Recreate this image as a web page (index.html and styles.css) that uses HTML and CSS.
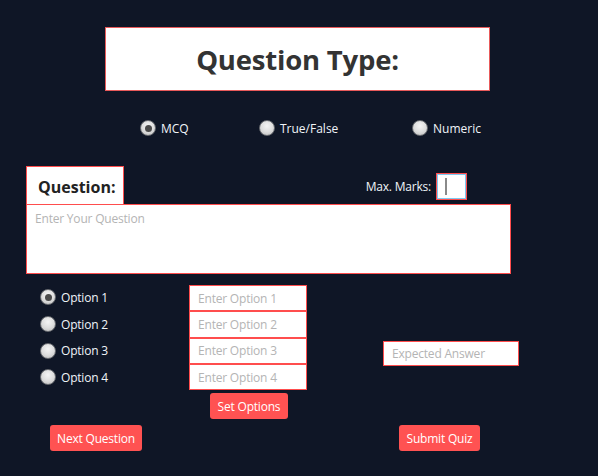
FILE: index.html
```html
<!DOCTYPE html>
<html>
<head>
<meta charset="utf-8">
<link rel="stylesheet" href="styles.css">
</head>
<body>
<div class="page">
  <div class="title">Question Type:</div>
  <div class="types">
    <label class="type t1"><span class="radio on"></span>MCQ</label>
    <label class="type t2"><span class="radio"></span>True/False</label>
    <label class="type t3"><span class="radio"></span>Numeric</label>
  </div>
  <div class="qhead">
    <div class="qlabel">Question:</div>
    <div class="marks">
      <span class="marks-label">Max. Marks:</span>
      <span class="marks-input"><span class="caret"></span></span>
    </div>
  </div>
  <div class="qarea">Enter Your Question</div>
  <div class="options">
    <div class="opt-col">
      <label class="opt"><span class="radio on"></span>Option 1</label>
      <label class="opt"><span class="radio"></span>Option 2</label>
      <label class="opt"><span class="radio"></span>Option 3</label>
      <label class="opt"><span class="radio"></span>Option 4</label>
    </div>
    <div class="input-col">
      <div class="field">Enter Option 1</div>
      <div class="field">Enter Option 2</div>
      <div class="field">Enter Option 3</div>
      <div class="field">Enter Option 4</div>
      <div class="btn set">Set Options</div>
    </div>
    <div class="answer-col">
      <div class="field answer">Expected Answer</div>
    </div>
  </div>
  <div class="bottom">
    <div class="btn next">Next Question</div>
    <div class="btn submit">Submit Quiz</div>
  </div>
</div>
</body>
</html>
```
FILE: styles.css
```css
html, body {
  margin: 0;
  padding: 0;
  background: #0f1626;
}
body {
  font-family: "Open Sans", "Noto Sans", sans-serif;
  font-size: 12px;
  color: #f0f4f8;
}
.page {
  width: 598px;
  height: 476px;
  overflow: hidden;
  padding-top: 27px;
  box-sizing: border-box;
}
.title {
  margin-left: 105px;
  width: 385px;
  height: 64px;
  box-sizing: border-box;
  border: 1px solid #e85a5a;
  background: #fff;
  color: #333;
  font-weight: 700;
  font-size: 27.5px;
  display: flex;
  align-items: center;
  justify-content: center;
  letter-spacing: -0.2px;
}
.types {
  display: flex;
  margin-top: 28px;
  padding-left: 140px;
  height: 18px;
  align-items: center;
}
.type {
  display: flex;
  align-items: center;
  gap: 5px;
}
.t1 { width: 119px; }
.t2 { width: 153px; }
.radio {
  width: 16px;
  height: 16px;
  border-radius: 50%;
  box-sizing: border-box;
  background: radial-gradient(circle at 50% 35%, #f4f4f4 0%, #dcdcdc 55%, #b8b8b8 100%);
  border: 1px solid #6a6d72;
  display: inline-flex;
  align-items: center;
  justify-content: center;
  flex: none;
}
.radio.on::after {
  content: "";
  width: 7px;
  height: 7px;
  border-radius: 50%;
  background: #4a4a4a;
}
.qhead {
  display: flex;
  margin-top: 29px;
  margin-left: 26px;
  width: 485px;
  justify-content: space-between;
  align-items: flex-end;
}
.qlabel {
  width: 98px;
  height: 38px;
  box-sizing: border-box;
  border: 1px solid #ff4d4d;
  border-bottom: none;
  background: #fff;
  color: #222;
  font-weight: 700;
  font-size: 16px;
  padding-left: 11px;
  display: flex;
  align-items: center;
  padding-top: 2px;
}
.marks {
  display: flex;
  align-items: center;
  gap: 5px;
  margin-right: 44px;
  margin-bottom: 4px;
}
.marks-label {
  font-size: 12px;
  letter-spacing: -0.2px;
}
.marks-input {
  width: 31px;
  height: 27px;
  box-sizing: border-box;
  border: 1px solid #ff4d4d;
  box-shadow: inset 0 0 0 1px #7ec8f0;
  background: #fff;
  display: flex;
  align-items: center;
  padding-left: 8px;
}
.caret {
  width: 2px;
  height: 17px;
  background: #8a8a8a;
}
.qarea {
  margin-left: 26px;
  width: 485px;
  height: 70px;
  box-sizing: border-box;
  border: 1px solid #ff4d4d;
  background: #fff;
  color: #b4b4b4;
  padding: 5px 8px;
  font-size: 12px;
  letter-spacing: -0.2px;
}
.options {
  display: flex;
  margin-top: 11px;
}
.opt-col {
  margin-left: 40px;
  margin-top: -1px;
  width: 149px;
  display: flex;
  flex-direction: column;
}
.opt {
  display: flex;
  align-items: center;
  gap: 5px;
  height: 26.7px;
  letter-spacing: -0.2px;
}
.input-col {
  width: 118px;
  display: flex;
  flex-direction: column;
  align-items: flex-start;
}
.field {
  width: 118px;
  height: 26.3px;
  box-sizing: border-box;
  border: 1px solid #ff4d4d;
  background: #fff;
  color: #b4b4b4;
  display: flex;
  align-items: center;
  padding-left: 8px;
  letter-spacing: -0.2px;
}
.answer-col {
  margin-left: 76px;
  padding-top: 56px;
}
.field.answer {
  width: 136px;
  height: 25px;
}
.btn {
  background: #ff5252;
  color: #fff;
  border-radius: 3px;
  height: 26px;
  display: flex;
  align-items: center;
  justify-content: center;
  letter-spacing: -0.2px;
}
.set {
  margin-top: 3px;
  margin-left: 21px;
  width: 78px;
}
.bottom {
  display: flex;
  margin-top: 6px;
  padding-left: 50px;
}
.next { width: 92px; }
.submit { width: 81px; margin-left: 257px; }
```
